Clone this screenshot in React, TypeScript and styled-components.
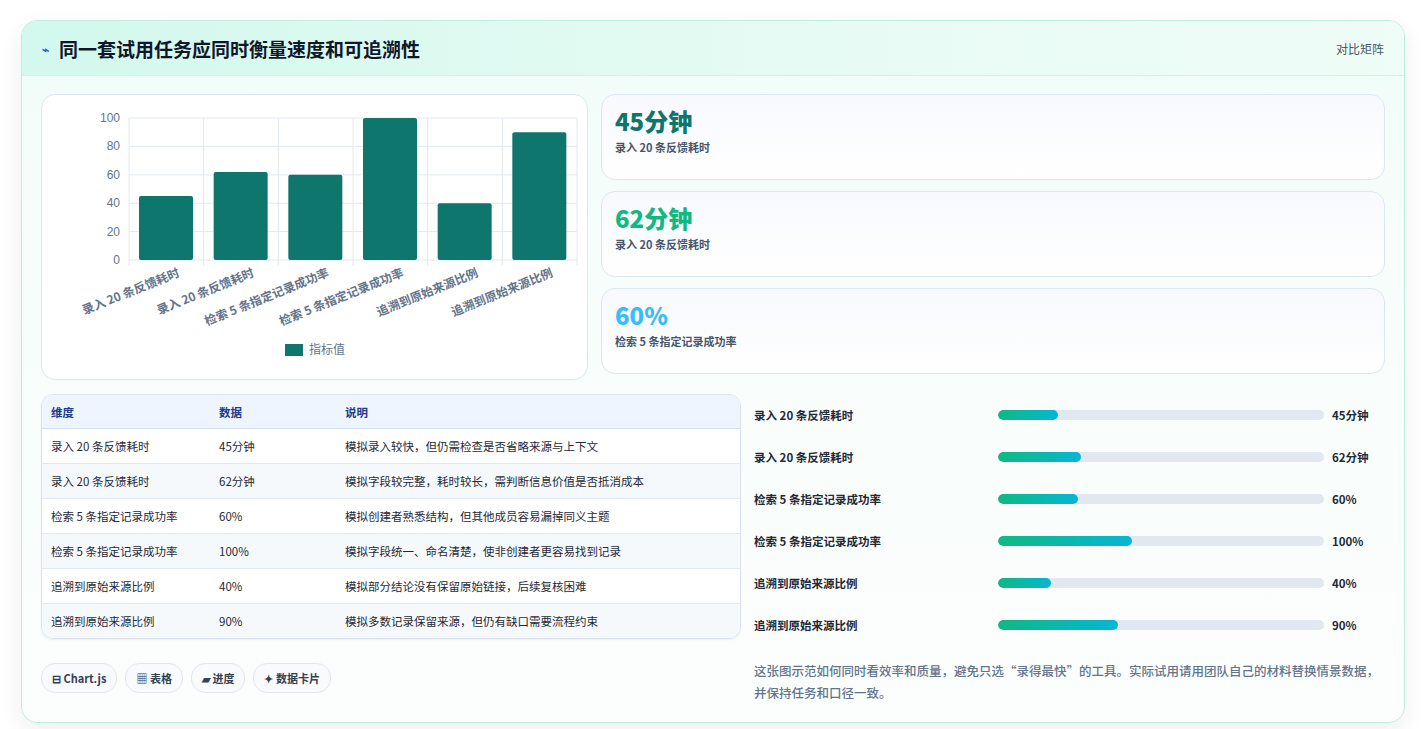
import React from "react";
import styled, { createGlobalStyle } from "styled-components";

const G = createGlobalStyle`
  body{margin:0;background:#fff;font-family:"Noto Sans CJK SC","Noto Sans",sans-serif;}
`;
const Page = styled.div`padding:20px 21px 22px 21px;`;
const Card = styled.div`
  border:1px solid #bfeee0;border-radius:16px;overflow:hidden;
  background:linear-gradient(180deg,#f0fdf9,#f8fdfc 40%,#fbfefd);
  box-shadow:0 8px 22px rgba(15,23,42,0.07);
`;
const Head = styled.div`
  height:54px;display:flex;align-items:center;justify-content:space-between;
  padding:0 20px;border-bottom:1px solid #d5efe9;
  background:linear-gradient(90deg,#d3f8ed,#e7fbf4 60%,#effcf7);
`;
const Title = styled.h1`margin:0;font-size:19px;font-weight:700;color:#0f172a;display:flex;align-items:center;gap:10px;`;
const Bolt = styled.span`color:#2563eb;font-size:12px;`;
const Tag = styled.span`font-size:12px;color:#475569;`;
const Body = styled.div`padding:18px 19px 18px 19px;display:flex;flex-direction:column;gap:14px;`;
const Top = styled.div`display:grid;grid-template-columns:547px 1fr;gap:13px;`;
const Panel = styled.div`background:#fff;border:1px solid #dbe8f0;border-radius:14px;height:284px;`;
const Stats = styled.div`display:flex;flex-direction:column;gap:11px;`;
const Stat = styled.div`height:86px;box-sizing:border-box;border:1px solid #dbe8f0;border-radius:14px;
  background:linear-gradient(180deg,#f7f9fe,#fff);padding:10px 13px;`;
const Big = styled.div<{c:string}>`font-size:24px;font-weight:800;color:${p=>p.c};line-height:32px;`;
const Sub = styled.div`font-size:11px;color:#475569;font-weight:600;margin-top:2px;`;
const Bottom = styled.div`display:grid;grid-template-columns:700px 1fr;gap:13px;`;
const Left = styled.div`display:flex;flex-direction:column;gap:24px;`;
const Table = styled.table`width:100%;border-collapse:collapse;border:1px solid #dbe3ee;border-radius:12px;overflow:hidden;
  border-spacing:0;font-size:11.5px;box-shadow:0 1px 2px rgba(0,0,0,0.06);
  border-collapse:separate;
`;
const Th = styled.th`text-align:left;font-weight:600;color:#1e3a8a;background:#eef5ff;height:33px;padding:0 9px;border-bottom:1px solid #d5e1ee;`;
const Td = styled.td<{alt?:boolean}>`height:34px;padding:0 9px;color:#1f2937;background:${p=>p.alt?"#f6f9fc":"#fff"};border-bottom:1px solid #e2e8f0;
  tr:last-child &{border-bottom:none;}`;
const Chips = styled.div`display:flex;gap:8px;`;
const Chip = styled.span`font-size:11px;font-weight:600;color:#334155;border:1px solid #e2e8f0;background:#f8fafc;border-radius:14px;padding:6px 10px;`;
const Right = styled.div`display:flex;flex-direction:column;`;
const Row = styled.div`display:grid;grid-template-columns:236px 326px 1fr;align-items:center;column-gap:8px;height:42px;`;
const RLabel = styled.span`font-size:11.5px;font-weight:600;color:#1f2937;`;
const Track = styled.div`height:10px;background:#e2e8f0;border-radius:5px;overflow:hidden;`;
const Fill = styled.div`height:100%;border-radius:5px;background:linear-gradient(90deg,#10b981,#06b6d4);`;
const RVal = styled.span`font-size:11.5px;font-weight:700;color:#1f2937;`;
const Note = styled.p`margin:14px 0 0;font-size:12.5px;line-height:22px;color:#64748b;font-weight:500;`;

const labels=["录入 20 条反馈耗时","录入 20 条反馈耗时","检索 5 条指定记录成功率","检索 5 条指定记录成功率","追溯到原始来源比例","追溯到原始来源比例"];
const vals=[45,62,60,100,40,90];
const disp=["45分钟","62分钟","60%","100%","40%","90%"];
const notes=["模拟录入较快，但仍需检查是否省略来源与上下文","模拟字段较完整，耗时较长，需判断信息价值是否抵消成本","模拟创建者熟悉结构，但其他成员容易漏掉同义主题","模拟字段统一、命名清楚，使非创建者更容易找到记录","模拟部分结论没有保留原始链接，后续复核困难","模拟多数记录保留来源，但仍有缺口需要流程约束"];

function Chart(){
  const L=87,R=535,T=23,B=165,step=(R-L)/6;
  const y=(v:number)=>B-(B-T)*v/100;
  return <svg width="545" height="282" style={{display:"block"}}>
    {[0,20,40,60,80,100].map(v=><g key={v}>
      <line x1={L} x2={R} y1={y(v)} y2={y(v)} stroke="#e2e8f0"/>
      <text x={L-9} y={y(v)+4} textAnchor="end" fontSize="12" fill="#64748b" fontFamily="Liberation Sans, sans-serif">{v}</text>
    </g>)}
    {Array.from({length:7}).map((_,i)=><line key={i} x1={L+i*step} x2={L+i*step} y1={T} y2={B+6} stroke="#e2e8f0"/>)}
    {vals.map((v,i)=><rect key={i} x={L+i*step+10} y={y(v)} width={54} height={B-y(v)} rx="2" fill="#0f766e"/>)}
    {labels.map((l,i)=><text key={i} transform={`translate(${L+i*step+step/2+14},${B+16}) rotate(-22)`} textAnchor="end" fontSize="12" fontWeight="700" fill="#64748b">{l}</text>)}
    <rect x="243" y="249" width="18" height="12" fill="#0f766e"/>
    <text x="267" y="259" fontSize="12" fill="#64748b">指标值</text>
  </svg>;
}

export default function App(){
  return <Page><G/><Card>
    <Head><Title><Bolt>⌁</Bolt>同一套试用任务应同时衡量速度和可追溯性</Title><Tag>对比矩阵</Tag></Head>
    <Body>
      <Top>
        <Panel><Chart/></Panel>
        <Stats>
          <Stat><Big c="#0f766e">45分钟</Big><Sub>录入 20 条反馈耗时</Sub></Stat>
          <Stat><Big c="#10b981">62分钟</Big><Sub>录入 20 条反馈耗时</Sub></Stat>
          <Stat><Big c="#38bdf8">60%</Big><Sub>检索 5 条指定记录成功率</Sub></Stat>
        </Stats>
      </Top>
      <Bottom>
        <Left>
          <Table><thead><tr><Th style={{width:150}}>维度</Th><Th style={{width:108}}>数据</Th><Th>说明</Th></tr></thead>
            <tbody>{labels.map((l,i)=><tr key={i}><Td alt={i%2===1}>{l}</Td><Td alt={i%2===1}>{disp[i]}</Td><Td alt={i%2===1}>{notes[i]}</Td></tr>)}</tbody>
          </Table>
          <Chips><Chip>⊟ Chart.js</Chip><Chip>▦ 表格</Chip><Chip>▰ 进度</Chip><Chip>✦ 数据卡片</Chip></Chips>
        </Left>
        <Right>
          {labels.map((l,i)=><Row key={i}><RLabel>{l}</RLabel><Track><Fill style={{width:`${vals[i]*0.41}%`}}/></Track><RVal>{disp[i]}</RVal></Row>)}
          <Note>这张图示范如何同时看效率和质量，避免只选“录得最快”的工具。实际试用请用团队自己的材料替换情景数据，并保持任务和口径一致。</Note>
        </Right>
      </Bottom>
    </Body>
  </Card></Page>;
}
